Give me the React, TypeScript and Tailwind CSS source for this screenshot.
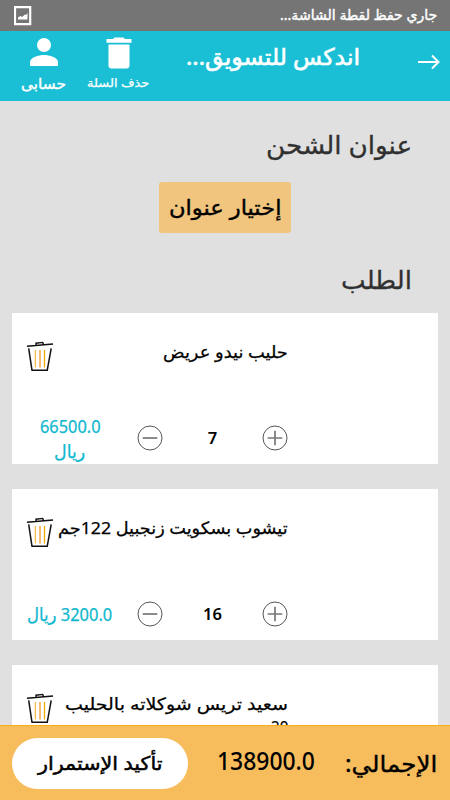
import { useLayoutEffect, useRef, useState } from "react";

type FitProps = { text: string; width: number; className: string };

// One line of Arabic text, condensed or widened to the given width.
function Fit({ text, width, className }: FitProps) {
  const ref = useRef<HTMLSpanElement>(null);
  const [scale, setScale] = useState(1);
  useLayoutEffect(() => {
    if (ref.current) setScale(width / ref.current.offsetWidth);
  }, [text, width]);
  return (
    <span className="flex shrink-0 justify-start" style={{ width }}>
      <span
        ref={ref}
        className={`block shrink-0 origin-right whitespace-nowrap ${className}`}
        style={{ transform: `scaleX(${scale})` }}
      >
        {text}
      </span>
    </span>
  );
}

function Bin() {
  return (
    <svg width="28" height="32" viewBox="0 0 28 32" fill="none" className="shrink-0">
      <path d="M1 5.200 27 3M10 4.200V2.200l6.700-.8.800 2" stroke="#111" strokeWidth="1.400" />
      <path d="M2.700 7.300 6 29.300H21.200L25.200 7.300" stroke="#111" strokeWidth="1.500" strokeLinejoin="round" />
      <path d="M9.400 9v17.500" stroke="#f8b84e" strokeWidth="1.300" />
      <path d="M14 9v17.500" stroke="#f8bd72" strokeWidth="2" />
      <path d="M18.500 9v17.500" stroke="#f3a900" strokeWidth="1.300" />
    </svg>
  );
}

function Round({ plus }: { plus?: boolean }) {
  return (
    <svg width="26" height="26" viewBox="0 0 26 26" fill="none" className="shrink-0">
      <circle cx="13" cy="13" r="12" stroke="#555" strokeWidth="1" />
      <path d={plus ? "M5.7 13h14.6M13 5.7v14.6" : "M5.7 13h14.6"} stroke="#777" strokeWidth="1.7" />
    </svg>
  );
}

type Item = {
  name: string;
  nameWidth: number;
  more?: string;
  qty?: string;
  price?: [string, number][];
};

const items: Item[] = [
  { name: "حليب نيدو عريض", nameWidth: 125, qty: "7", price: [["66500.0", 61], ["ريال", 31]] },
  { name: "تيشوب بسكويت زنجبيل 122جم", nameWidth: 230, qty: "16", price: [["3200.0 ريال", 85]] },
  { name: "سعيد تريس شوكلاته بالحليب", nameWidth: 223, more: "20" },
];

function Card({ item }: { item: Item }) {
  return (
    <div className="flex h-[151px] shrink-0 flex-col bg-white pr-[150px]">
      <div className="flex h-[99px] justify-between pt-[26px] pl-[14px]">
        <div className="flex flex-col [-webkit-text-stroke:0.25px_currentColor]">
          <Fit text={item.name} width={item.nameWidth} className="text-[17px] leading-[25px]" />
          {item.more && <Fit text={item.more} width={17} className="text-[17px] leading-[22px]" />}
        </div>
        <div className="-mr-6 pt-[2px]">
          <Bin />
        </div>
      </div>
      {item.qty && (
        <div className="flex h-[52px] items-center">
          <Round plus />
          <span className="w-[99px] shrink-0 text-center text-[16.500px] font-semibold">{item.qty}</span>
          <Round />
          <div className="flex flex-1 flex-col items-center pt-px pr-[9px] text-[#10b8cf] [-webkit-text-stroke:0.25px_currentColor]">
            {item.price?.map(([text, width]) => (
              <Fit key={text} text={text} width={width} className="text-[18px] leading-[25px]" />
            ))}
          </div>
        </div>
      )}
    </div>
  );
}

export default function App() {
  return (
    <div
      dir="rtl"
      className="flex h-[800px] w-[450px] flex-col overflow-hidden bg-[#e0e0e0] font-['Noto_Sans','DejaVu_Sans',sans-serif] text-black"
    >
      <div className="flex h-[31px] shrink-0 items-center justify-between bg-[#757575] pr-[13px] pl-[14px] text-white">
        <Fit text="جاري حفظ لقطة الشاشة..." width={157} className="pb-px text-[14px] leading-[28px] [-webkit-text-stroke:0.4px_currentColor]" />
        <svg width="18" height="20" viewBox="0 0 18 20">
          <path d="M1 1.200h15.200v17H1z" fill="none" stroke="#fff" strokeWidth="2.200" />
          <path d="M4 13.500V11.500l2.500-1.500 1.500 1 3-2.500 1 .5 1.500-2V13.500z" fill="#fff" />
        </svg>
      </div>

      <header className="flex h-[70px] shrink-0 bg-[#1abfd5] text-white">
        <div className="w-[90px] pt-[22px] pr-[10px]">
          <svg width="23" height="18" viewBox="0 0 23 18" fill="none" stroke="#fff" strokeWidth="2">
            <path d="M1 9h20.500M15 2.500l6.500 6.500-6.500 6.500" />
          </svg>
        </div>
        <div className="w-[210px] pt-[9px]">
          <Fit text="اندكس للتسويق..." width={174} className="text-[23px] leading-[32px] [-webkit-text-stroke:0.6px_currentColor]" />
        </div>
        <div className="flex w-[63px] flex-col items-center pt-[6px]">
          <svg width="26" height="32" viewBox="0 0 26 32" fill="#fff">
            <path d="M.5 2H7l1.500-1.600h9L19 2h6.500v3.800H.5z" />
            <path d="M2.500 7.500h21v21a3 3 0 0 1-3 3h-15a3 3 0 0 1-3-3z" />
          </svg>
          <Fit text="حذف السلة" width={62} className="text-[12px] leading-[27px] [-webkit-text-stroke:0.25px_currentColor]" />
        </div>
        <div className="flex w-[87px] flex-col items-center pt-[7px]">
          <svg width="28" height="29" viewBox="0 0 28 29" fill="#fff">
            <circle cx="14" cy="7" r="7" />
            <path d="M0 28v-4c0-4.500 9-7 14-7s14 2.500 14 7v4z" />
          </svg>
          <Fit text="حسابى" width={45} className="pt-px text-[15px] leading-[31px] [-webkit-text-stroke:0.4px_currentColor]" />
        </div>
      </header>

      <main className="flex min-h-0 flex-1 flex-col overflow-hidden px-[12px]">
        <div className="h-[81px] shrink-0 pt-[24px] pr-[26px] text-[#303030]">
          <Fit text="عنوان الشحن" width={146} className="text-[25px] leading-[38px] [-webkit-text-stroke:0.3px_currentColor]" />
        </div>
        <button className="flex h-[51px] w-[132px] shrink-0 items-center justify-center self-center rounded-[3px] bg-[#f1c57d]">
          <Fit text="إختيار عنوان" width={112} className="pb-[2px] text-[21px] leading-[50px] [-webkit-text-stroke:0.4px_currentColor]" />
        </button>
        <div className="h-[80px] shrink-0 pt-[27px] pr-[26px] text-[#303030]">
          <Fit text="الطلب" width={71} className="text-[25px] leading-[38px] [-webkit-text-stroke:0.3px_currentColor]" />
        </div>
        <div className="flex flex-col gap-[25px]">
          {items.map((item) => (
            <Card key={item.name} item={item} />
          ))}
        </div>
      </main>

      <footer className="flex h-[75px] shrink-0 items-center border-t border-[#f8ae1b] bg-[#f7bd5d] pr-[13px] pl-[12px]">
        <Fit text="الإجمالي:" width={92} className="pb-px text-[23px] leading-[50px] [-webkit-text-stroke:0.4px_currentColor]" />
        <div className="mr-[30px] pb-[6px]">
          <Fit text="138900.0" width={98} className="text-[25px] leading-[50px] font-medium" />
        </div>
        <button className="mr-auto flex h-[51px] w-[176px] items-center justify-center rounded-full bg-white">
          <Fit text="تأكيد الإستمرار" width={124} className="pb-px text-[19px] leading-[50px] [-webkit-text-stroke:0.5px_currentColor]" />
        </button>
      </footer>
    </div>
  );
}
